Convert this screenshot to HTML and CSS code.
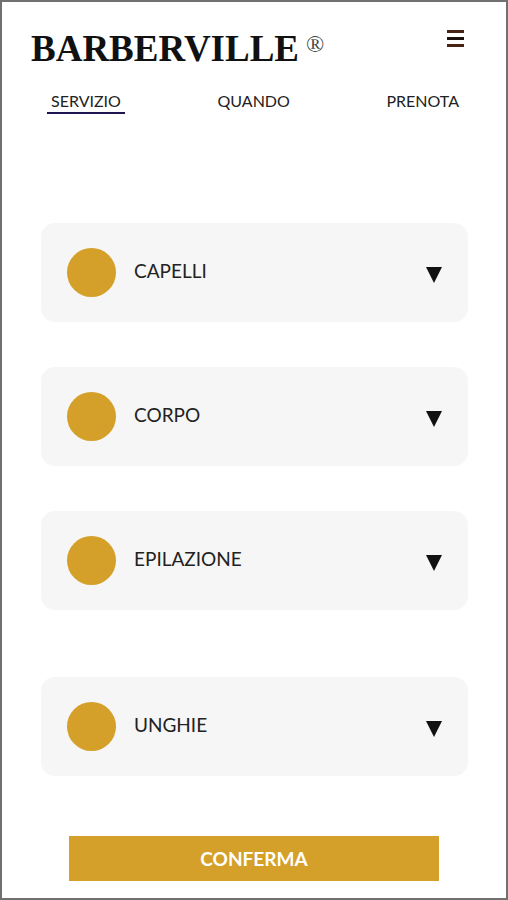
FILE: index.html
```
<!DOCTYPE html>
<html lang="it">
<head>
  <meta charset="UTF-8">
  <meta name="viewport" content="width=device-width, initial-scale=1.0">
  <title>Barberville</title>
  <link rel="stylesheet" href="styles.css">
</head>
<body>
  <div class="page">
    <header class="header">
      <h1 class="logo">BARBERVILLE<sup class="mark">®</sup></h1>
      <button type="button" class="menu" aria-label="Menu">
        <svg width="17" height="17" viewBox="0 0 17 17" aria-hidden="true">
          <path d="M0 0h17v3H0z" fill="#4a2317"/>
          <path d="M0 7h17v3H0z" fill="#1c0f0f"/>
          <path d="M0 14h17v3H0z" fill="#4a2317"/>
        </svg>
      </button>
    </header>

    <nav class="tabs">
      <a href="#servizio" class="tab active">SERVIZIO</a>
      <a href="#quando" class="tab">QUANDO</a>
      <a href="#prenota" class="tab">PRENOTA</a>
    </nav>

    <main class="services" id="servizio">
      <button type="button" class="card">
        <span class="dot"></span>
        <span class="name">CAPELLI</span>
        <svg class="arrow" width="16" height="16" viewBox="0 0 16 16" aria-hidden="true"><path d="M0 0h16L8 16z"/></svg>
      </button>
      <button type="button" class="card">
        <span class="dot"></span>
        <span class="name">CORPO</span>
        <svg class="arrow" width="16" height="16" viewBox="0 0 16 16" aria-hidden="true"><path d="M0 0h16L8 16z"/></svg>
      </button>
      <button type="button" class="card">
        <span class="dot"></span>
        <span class="name">EPILAZIONE</span>
        <svg class="arrow" width="16" height="16" viewBox="0 0 16 16" aria-hidden="true"><path d="M0 0h16L8 16z"/></svg>
      </button>
      <button type="button" class="card last">
        <span class="dot"></span>
        <span class="name">UNGHIE</span>
        <svg class="arrow" width="16" height="16" viewBox="0 0 16 16" aria-hidden="true"><path d="M0 0h16L8 16z"/></svg>
      </button>
    </main>

    <button type="button" class="confirm">CONFERMA</button>
  </div>
</body>
</html>
```
FILE: styles.css
```
* {box-sizing: border-box;}
body {margin: 0; background-color: #fff; color: #222; font-family: Lato, sans-serif;}
button {border: none; color: inherit; font-family: inherit; cursor: pointer;}

.page {display: flex; flex-direction: column; min-height: 100vh; padding-bottom: 16px; border: 2px solid #707070;}

.header {display: flex; justify-content: space-between; align-items: flex-start; padding: 26px 42px 0 29px;}
.logo {display: flex; align-items: flex-start; gap: 7px; margin: 0; font: bold 37px/42px "Liberation Serif", serif; color: #111;}
.mark {font-size: 24px; font-weight: normal; line-height: 32px; color: #444;}
.menu {display: flex; padding: 2px 0; background: none;}

.tabs {display: flex; justify-content: space-between; padding: 20px 43px 0 45px;}
.tab {padding: 0 4px; border-bottom: 2px solid transparent; color: #222; font-size: 16px; line-height: 22px; text-decoration: none;}
.tab.active {border-color: #1d1650;}

.services {display: flex; flex-direction: column; gap: 45px; padding: 109px 38px 0 39px;}
.card {display: flex; align-items: center; gap: 18px; padding: 25px 26px; border-radius: 14px; background-color: #f6f6f6;}
.card.last {margin-top: 22px;}
.dot {width: 49px; height: 49px; border-radius: 50%; background-color: #d4a029;}
.name {flex: 1; padding-bottom: 4px; font-size: 19px; line-height: 24px; text-align: left;}
.arrow {margin-top: 5px; fill: #111;}

.confirm {margin: 60px 67px 0; padding: 10px; background-color: #d4a029; color: #fff; font-size: 19px; font-weight: bold; line-height: 25px;}
```
